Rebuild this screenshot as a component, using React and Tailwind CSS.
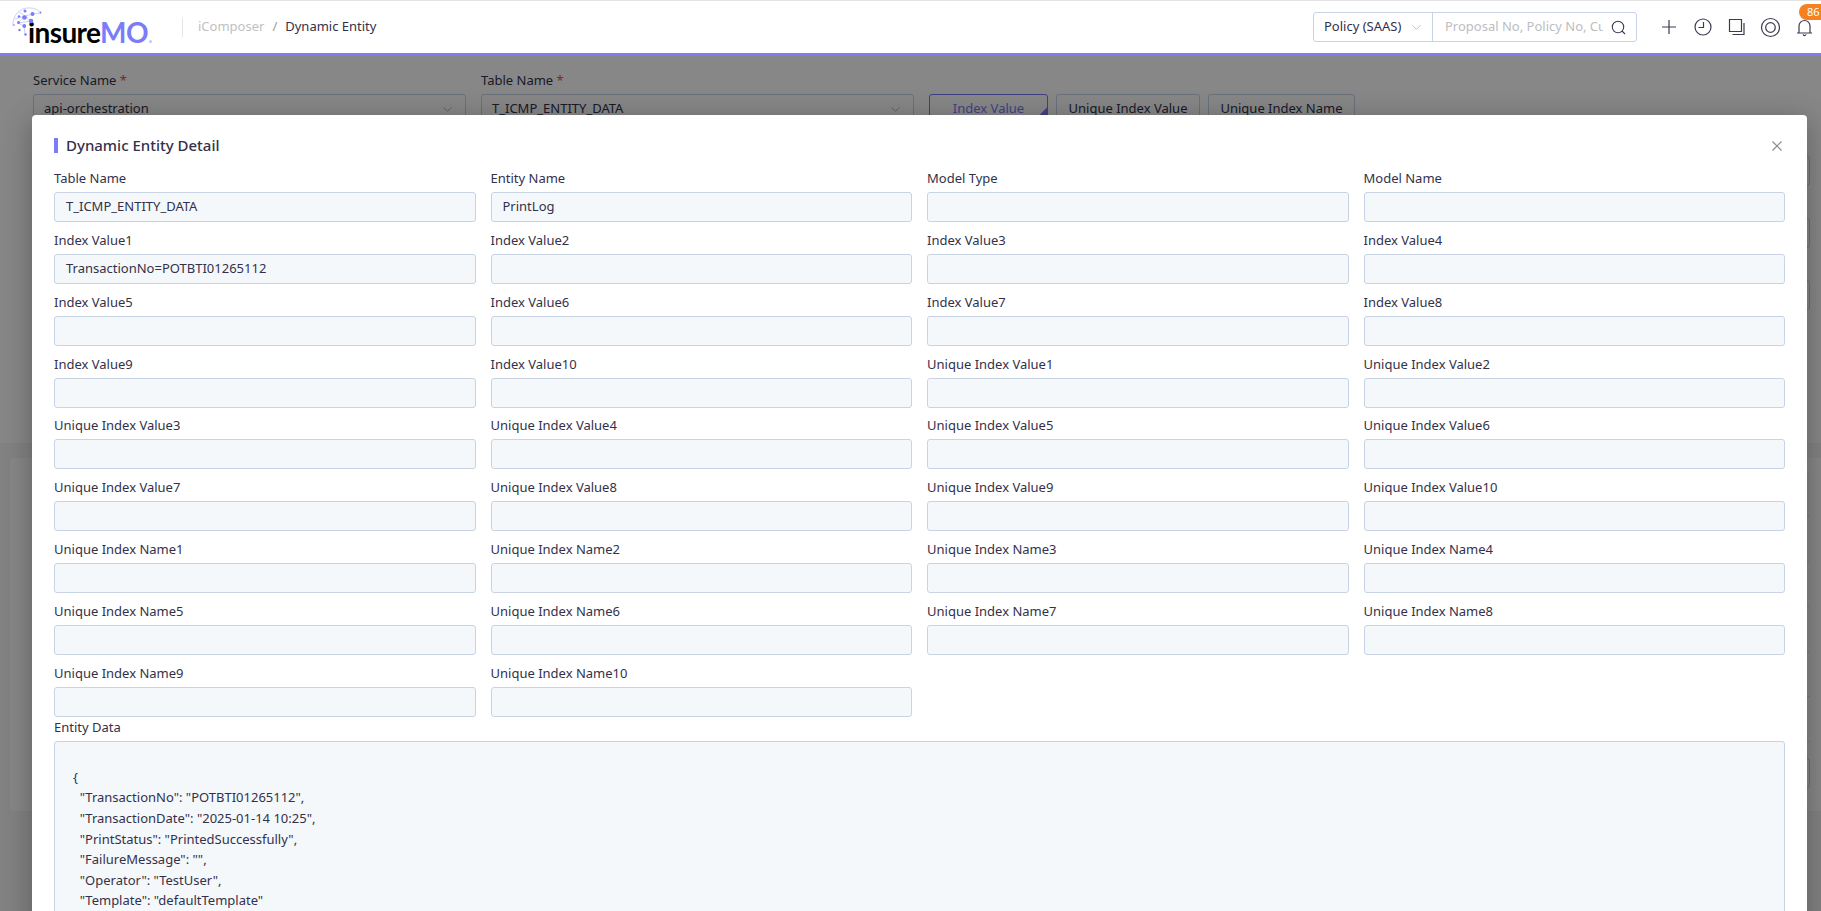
import { ChevronDown } from "lucide-react"

const fields = [
  ["Table Name", "T_ICMP_ENTITY_DATA"],
  ["Entity Name", "PrintLog"],
  ["Model Type", ""],
  ["Model Name", ""],
  ["Index Value1", "TransactionNo=POTBTI01265112"],
  ...[2, 3, 4, 5, 6, 7, 8, 9, 10].map((n) => [`Index Value${n}`, ""]),
  ...[1, 2, 3, 4, 5, 6, 7, 8, 9, 10].map((n) => [`Unique Index Value${n}`, ""]),
  ...[1, 2, 3, 4, 5, 6, 7, 8, 9, 10].map((n) => [`Unique Index Name${n}`, ""]),
]

const entityData = `{
  "TransactionNo": "POTBTI01265112",
  "TransactionDate": "2025-01-14 10:25",
  "PrintStatus": "PrintedSuccessfully",
  "FailureMessage": "",
  "Operator": "TestUser",
  "Template": "defaultTemplate"
}`

function Logo() {
  return (
    <div className="relative flex h-[40px] w-[142px] items-end pl-[16px]">
      <svg className="absolute left-0 top-0" width="32" height="32" viewBox="0 0 32 32" fill="#7a7cf8">
        <g fill="none" stroke="#7a7cf8" strokeWidth="0.6" opacity="0.6">
          <path d="M1 19C0 9 8 0 18 1c5 0 8 2 11 5" />
          <path d="M3 12l10-3 8-2 8-1M7 5l6 4-7 7 13-2M13 9l6 5M6 16l6 3 1 8" />
        </g>
        <circle cx="12.5" cy="10.5" r="2.3" />
        <circle cx="19" cy="14" r="2.3" />
        <circle cx="20.5" cy="7" r="2" />
        <circle cx="12.3" cy="19" r="1.9" />
        <circle cx="6.5" cy="15.5" r="1.5" />
        <circle cx="7" cy="9.5" r="1.3" />
        <circle cx="13" cy="4" r="1.5" />
        <circle cx="28.5" cy="5.5" r="0.9" />
        <circle cx="7.5" cy="23" r="1.2" />
        <circle cx="13.5" cy="27.5" r="1.2" />
        <circle cx="2" cy="18" r="0.8" />
      </svg>
      <span className="whitespace-nowrap font-['Lato'] text-[28px] font-bold leading-[30px] tracking-[-0.6px] text-black">
        insure<span className="text-[#7a7cf8]">MO</span>
      </span>
      <span className="mb-[4px] ml-[1px] h-[3px] w-[3px] rounded-full bg-[#c4c5fc]" />
    </div>
  )
}

function Header() {
  return (
    <header className="flex h-[55px] items-center border-t border-b-2 border-t-[#e3e3e3] border-b-[#7a7cf8] bg-white pl-[12px]">
      <Logo />
      <div className="ml-[28px] h-[19px] w-px bg-[#e6e6ea]" />
      <nav className="ml-[15px] flex gap-[8px]">
        <span className="text-[#bfbfc4]">iComposer</span>
        <span className="text-[#9a9aa2]">/</span>
        <span>Dynamic Entity</span>
      </nav>

      <div className="ml-auto flex h-[30px] w-[324px] shrink-0 rounded-[3px] border border-[#c8d4e6]">
        <div className="flex w-[119px] items-center border-r border-[#c8d4e6] pl-[10px]">
          <span className="whitespace-nowrap">Policy (SAAS)</span>
          <ChevronDown className="ml-[8px]" size={15} strokeWidth={1.3} color="#b4b4bc" />
        </div>
        <div className="flex flex-1 items-center pl-[12px]">
          <span className="w-[158px] overflow-hidden whitespace-nowrap text-[#bdbdc2]">
            Proposal No, Policy No, Customer
          </span>
          <svg className="ml-[8px]" width="15" height="15" viewBox="0 0 15 15" fill="none" stroke="#3c3a52" strokeWidth="1.1">
            <circle cx="7" cy="7" r="5.7" />
            <path d="M11 11l3 3" />
          </svg>
        </div>
      </div>

      <div className="relative ml-[24px] flex w-[160px] shrink-0 items-center">
        <svg width="160" height="26" viewBox="0 0 160 26" fill="none" stroke="#3c3a52" strokeWidth="1.2">
          <path d="M8 6v14M1 13h14" />
          <circle cx="42" cy="13" r="8" />
          <path d="M42.5 8v5.500H37.500" />
          <path d="M68.500 5.500h12v12h-12zM83 9v11.500H71.500" />
          <circle cx="109.500" cy="13.500" r="9" />
          <circle cx="109.500" cy="13.500" r="4.800" />
          <path d="M136 19h15M138 19v-7a5.500 5.500 0 0 1 11 0v7M142 20.500a1.600 1.600 0 0 0 3 0" />
        </svg>
        <span className="absolute -top-[10px] left-[138px] flex h-[16px] w-[30px] items-center rounded-l-full bg-[#f5821f] pl-[8px] text-[11px] text-white">
          86
        </span>
      </div>
    </header>
  )
}

function Select({ label, value }) {
  return (
    <div className="w-[433px]">
      <div className="h-[22px] leading-[22px]">
        {label} <span className="text-[#f04848]">*</span>
      </div>
      <div className="mt-[3px] flex h-[30px] items-center justify-between rounded-[3px] border border-[#c8d4e6] px-[10px]">
        {value}
        <ChevronDown size={15} strokeWidth={1.3} color="#a8a8b0" />
      </div>
    </div>
  )
}

function SearchPage() {
  return (
    <div className="h-[856px] bg-[#f5f5f6]">
      <div className="flex h-[388px] gap-[15px] bg-white pl-[33px] pt-[14px]">
        <Select label="Service Name" value="api-orchestration" />
        <Select label="Table Name" value="T_ICMP_ENTITY_DATA" />
        <div className="flex gap-[8px] pt-[25px]">
          <div className="relative flex h-[30px] w-[119px] items-center justify-center overflow-hidden rounded-[3px] border border-[#7a7cf8] text-[#7a7cf8]">
            Index Value
            <span className="absolute -right-[11px] top-[17px] h-[22px] w-[22px] rotate-45 bg-[#7a7cf8]" />
          </div>
          <div className="flex h-[30px] w-[144px] items-center justify-center rounded-[3px] border border-[#c8d4e6]">
            Unique Index Value
          </div>
          <div className="flex h-[30px] w-[147px] items-center justify-center rounded-[3px] border border-[#c8d4e6]">
            Unique Index Name
          </div>
        </div>
        <div className="ml-auto mr-[11px] flex flex-col gap-[32px] pt-[87px]">
          <div className="h-[30px] w-[40px] rounded-[3px] border border-[#c8d4e6]" />
          <div className="h-[30px] w-[40px] rounded-[3px] border border-[#c8d4e6]" />
          <div className="h-[30px] w-[40px] rounded-[3px] border border-[#c8d4e6]" />
        </div>
      </div>
      <div className="ml-[10px] mt-[15px] flex h-[353px] flex-col rounded-l-[4px] bg-white pr-[11px] pt-[14px]">
        <div className="ml-auto h-[45px] w-[1765px] border-b border-[#e3e3e8] bg-[#f7f7f8]" />
        {[1, 2, 3, 4, 5].map((n) => (
          <div key={n} className="ml-auto h-[45px] w-[1765px] border-b border-[#e3e3e8]" />
        ))}
        <div className="ml-auto mt-[16px] h-[30px] w-[40px] rounded-[3px] border border-[#c8d4e6]" />
      </div>
    </div>
  )
}

function EntityModal() {
  return (
    <div className="absolute inset-x-0 bottom-0 top-[55px] overflow-hidden bg-black/[0.47]">
      <div className="ml-[32px] mt-[60px] h-[900px] w-[1775px] rounded-[4px] bg-white px-[22px] shadow-[0_6px_30px_rgba(0,0,0,0.3)]">
        <div className="flex h-[52px] items-center pt-[9px]">
          <span className="h-[15px] w-[4px] bg-[#7a7cf8]" />
          <h2 className="ml-[8px] text-[15px] font-medium text-[#33314a]">Dynamic Entity Detail</h2>
          <svg className="ml-auto mr-[2px]" width="12" height="12" viewBox="0 0 12 12" stroke="#8a8a92" strokeWidth="1.200">
            <path d="M1.500 1.500l9 9M10.500 1.500l-9 9" />
          </svg>
        </div>

        <div className="grid auto-rows-[61.86px] grid-cols-4 gap-x-[15px]">
          {fields.map(([label, value]) => (
            <div key={label}>
              <div className="h-[25px] leading-[23px]">{label}</div>
              <div className="flex h-[30px] items-center rounded-[3px] border border-[#c8d4e3] bg-[#f4f8fb] px-[11px]">
                {value}
              </div>
            </div>
          ))}
        </div>

        <div className="-mt-[8px] h-[25px] leading-[23px]">Entity Data</div>
        <pre className="h-[300px] rounded-[3px] border border-[#c8d4e3] bg-[#f4f8fb] pl-[18px] pt-[25px] font-['Noto_Sans'] text-[13px] leading-[20.600px]">
          {entityData}
        </pre>
      </div>
    </div>
  )
}

export default function App() {
  return (
    <div className="relative h-[911px] w-full overflow-hidden font-['Noto_Sans',sans-serif] text-[13px] text-[#33314a]">
      <Header />
      <SearchPage />
      <EntityModal />
    </div>
  )
}
